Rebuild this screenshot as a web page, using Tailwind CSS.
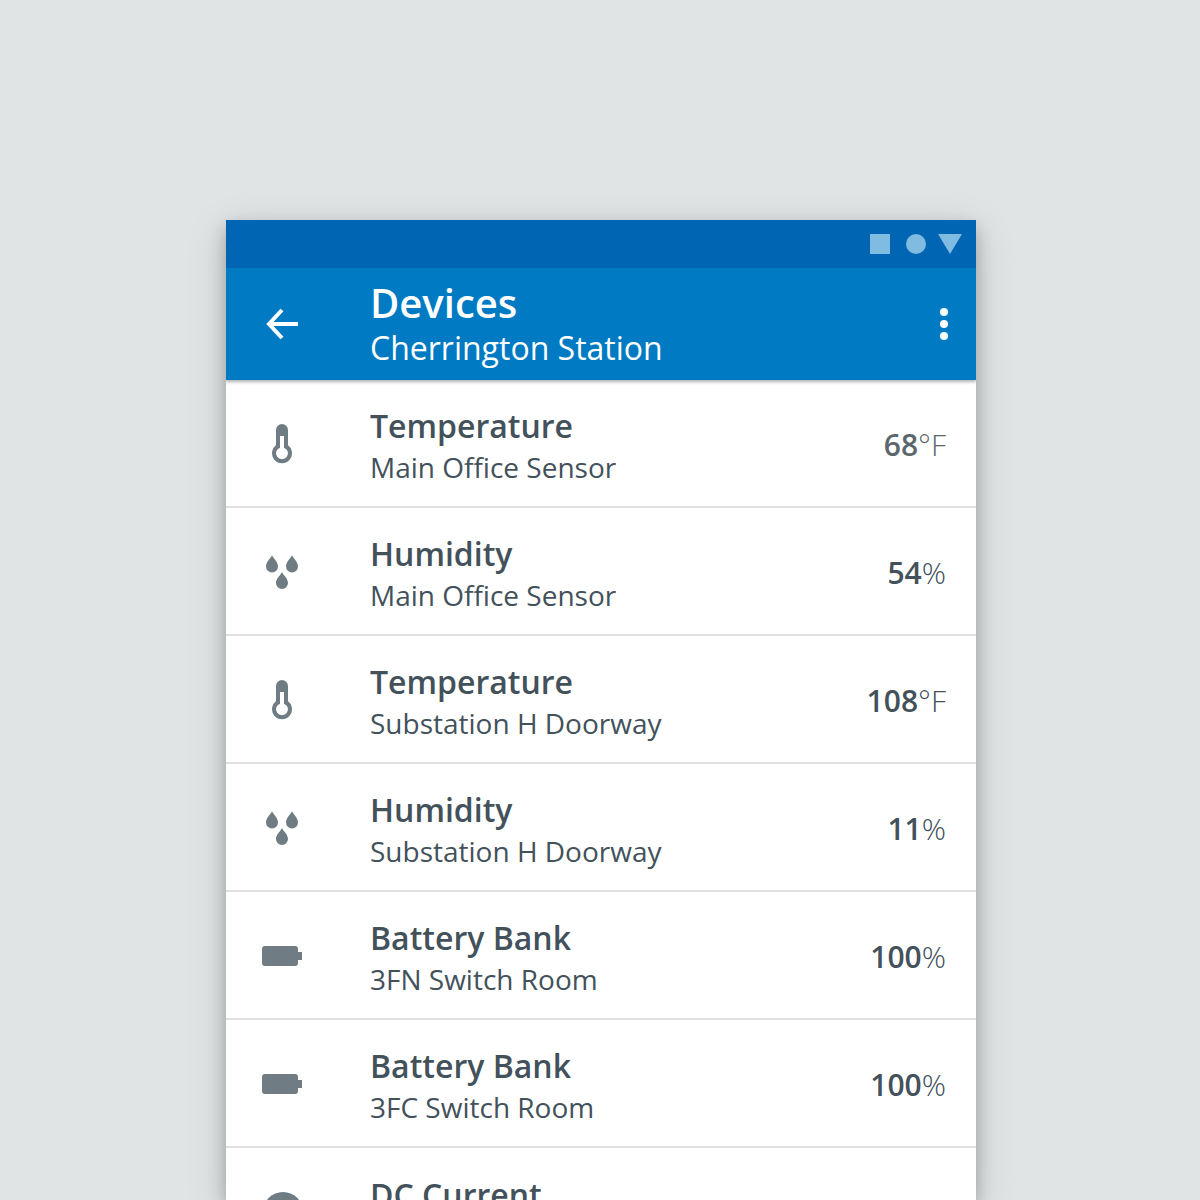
<!DOCTYPE html>
<html><head><meta charset="utf-8"><script src="https://cdn.jsdelivr.net/npm/@tailwindcss/browser@4"></script></head>
<body class="m-0">
<div class="w-[1200px] h-[1200px] overflow-hidden bg-[#e0e4e5] pt-[220px] pl-[226px] font-['Open_Sans',sans-serif]">
 <div class="w-[750px] h-[980px] overflow-hidden bg-white shadow-[0_10px_40px_rgba(0,0,0,0.14),0_8px_16px_rgba(0,0,0,0.24)] flex flex-col">
  <div class="h-[48px] shrink-0 bg-[#0066b3] flex items-center justify-end">
   <svg width="110" height="48" viewBox="0 0 110 48" class="block"><rect x="4" y="14" width="20" height="20" fill="#80bbe2"/><circle cx="50" cy="24" r="10" fill="#80bbe2"/><path d="M72 14H96L84 34Z" fill="#80bbe2"/></svg>
  </div>
  <div class="relative z-10 h-[112px] shrink-0 bg-[#007ac2] flex items-center shadow-[0_2px_3px_rgba(0,0,0,0.3)] text-white">
   <div class="w-[144px] shrink-0 pl-[40px]"><svg width="34" height="34" viewBox="0 0 34 34" class="block"><path d="M32 17H3M16 3L3 17L16 31" fill="none" stroke="#fff" stroke-width="4"/></svg></div>
   <div class="flex-1 min-w-0 pt-[1px]">
    <div class="text-[40px] leading-[46px] font-semibold">Devices</div>
    <div class="text-[32px] leading-[42px] mt-[1px]">Cherrington Station</div>
   </div>
   <div class="w-[64px] flex flex-col items-center gap-[4px]"><span class="w-[8px] h-[8px] rounded-full bg-white"></span><span class="w-[8px] h-[8px] rounded-full bg-white"></span><span class="w-[8px] h-[8px] rounded-full bg-white"></span></div>
  </div>

  <div class="h-[128px] shrink-0 border-b-2 border-[#e0e0e0] flex items-center text-[#43515b]">
   <div class="w-[144px] shrink-0 pl-[36px]"><svg width="40" height="44" viewBox="0 0 40 44" class="block mt-[2px]"><path d="M20 2a6 6 0 0 1 6 6V23.300a10 10 0 1 1-12 0V8a6 6 0 0 1 6-6Z" fill="#707c84"/><path d="M18 14H22V25.640a6 6 0 1 1-4 0Z" fill="#fff"/></svg></div>
   <div class="flex-1 min-w-0 pt-[6px]"><div class="text-[32px] leading-[42px] font-semibold">Temperature</div><div class="text-[28px] leading-[40px]">Main Office Sensor</div></div>
   <div class="pr-[30px] pt-[2px] text-[30px] font-semibold text-[#5b666d]">68<span class="font-light">°F</span></div>
  </div>
  <div class="h-[128px] shrink-0 border-b-2 border-[#e0e0e0] flex items-center text-[#43515b]">
   <div class="w-[144px] shrink-0 pl-[36px]"><svg width="40" height="38" viewBox="0 0 40 38" class="block"><g fill="#707c84"><path d="M10 3.300C11 6 16 9.500 16 14.500a6 6 0 0 1-12 0C4 9.500 9 6 10 3.300Z"/><path d="M30 3.300C31 6 36 9.500 36 14.500a6 6 0 0 1-12 0C24 9.500 29 6 30 3.300Z"/><path d="M20 20C21 22.700 26 26.200 26 31a6 6 0 0 1-12 0C14 26.200 19 22.700 20 20Z"/></g></svg></div>
   <div class="flex-1 min-w-0 pt-[6px]"><div class="text-[32px] leading-[42px] font-semibold">Humidity</div><div class="text-[28px] leading-[40px]">Main Office Sensor</div></div>
   <div class="pr-[30px] pt-[2px] text-[30px] font-semibold">54<span class="font-light">%</span></div>
  </div>
  <div class="h-[128px] shrink-0 border-b-2 border-[#e0e0e0] flex items-center text-[#43515b]">
   <div class="w-[144px] shrink-0 pl-[36px]"><svg width="40" height="44" viewBox="0 0 40 44" class="block mt-[2px]"><path d="M20 2a6 6 0 0 1 6 6V23.300a10 10 0 1 1-12 0V8a6 6 0 0 1 6-6Z" fill="#707c84"/><path d="M18 14H22V25.640a6 6 0 1 1-4 0Z" fill="#fff"/></svg></div>
   <div class="flex-1 min-w-0 pt-[6px]"><div class="text-[32px] leading-[42px] font-semibold">Temperature</div><div class="text-[28px] leading-[40px]">Substation H Doorway</div></div>
   <div class="pr-[30px] pt-[2px] text-[30px] font-semibold">108<span class="font-light">°F</span></div>
  </div>
  <div class="h-[128px] shrink-0 border-b-2 border-[#e0e0e0] flex items-center text-[#43515b]">
   <div class="w-[144px] shrink-0 pl-[36px]"><svg width="40" height="38" viewBox="0 0 40 38" class="block"><g fill="#707c84"><path d="M10 3.300C11 6 16 9.500 16 14.500a6 6 0 0 1-12 0C4 9.500 9 6 10 3.300Z"/><path d="M30 3.300C31 6 36 9.500 36 14.500a6 6 0 0 1-12 0C24 9.500 29 6 30 3.300Z"/><path d="M20 20C21 22.700 26 26.200 26 31a6 6 0 0 1-12 0C14 26.200 19 22.700 20 20Z"/></g></svg></div>
   <div class="flex-1 min-w-0 pt-[6px]"><div class="text-[32px] leading-[42px] font-semibold">Humidity</div><div class="text-[28px] leading-[40px]">Substation H Doorway</div></div>
   <div class="pr-[30px] pt-[2px] text-[30px] font-semibold">11<span class="font-light">%</span></div>
  </div>
  <div class="h-[128px] shrink-0 border-b-2 border-[#e0e0e0] flex items-center text-[#43515b]">
   <div class="w-[144px] shrink-0 pl-[36px]"><svg width="40" height="20" viewBox="0 0 40 20" class="block mt-[2px]"><rect width="36" height="20" rx="3" fill="#707c84"/><rect x="36" y="6" width="4" height="8" fill="#707c84"/></svg></div>
   <div class="flex-1 min-w-0 pt-[6px]"><div class="text-[32px] leading-[42px] font-semibold">Battery Bank</div><div class="text-[28px] leading-[40px]">3FN Switch Room</div></div>
   <div class="pr-[30px] pt-[2px] text-[30px] font-semibold">100<span class="font-light">%</span></div>
  </div>
  <div class="h-[128px] shrink-0 border-b-2 border-[#e0e0e0] flex items-center text-[#43515b]">
   <div class="w-[144px] shrink-0 pl-[36px]"><svg width="40" height="20" viewBox="0 0 40 20" class="block mt-[2px]"><rect width="36" height="20" rx="3" fill="#707c84"/><rect x="36" y="6" width="4" height="8" fill="#707c84"/></svg></div>
   <div class="flex-1 min-w-0 pt-[6px]"><div class="text-[32px] leading-[42px] font-semibold">Battery Bank</div><div class="text-[28px] leading-[40px]">3FC Switch Room</div></div>
   <div class="pr-[30px] pt-[2px] text-[30px] font-semibold">100<span class="font-light">%</span></div>
  </div>
  <div class="h-[128px] shrink-0 flex items-center text-[#43515b]">
   <div class="w-[144px] shrink-0 pl-[36px]"><svg width="40" height="40" viewBox="0 0 40 40" class="block"><circle cx="21" cy="20" r="20" fill="#707c84"/></svg></div>
   <div class="flex-1 min-w-0 pb-[34px]"><div class="text-[32px] leading-[42px] font-semibold">DC Current</div></div>
  </div>
 </div>
</div>
</body></html>
